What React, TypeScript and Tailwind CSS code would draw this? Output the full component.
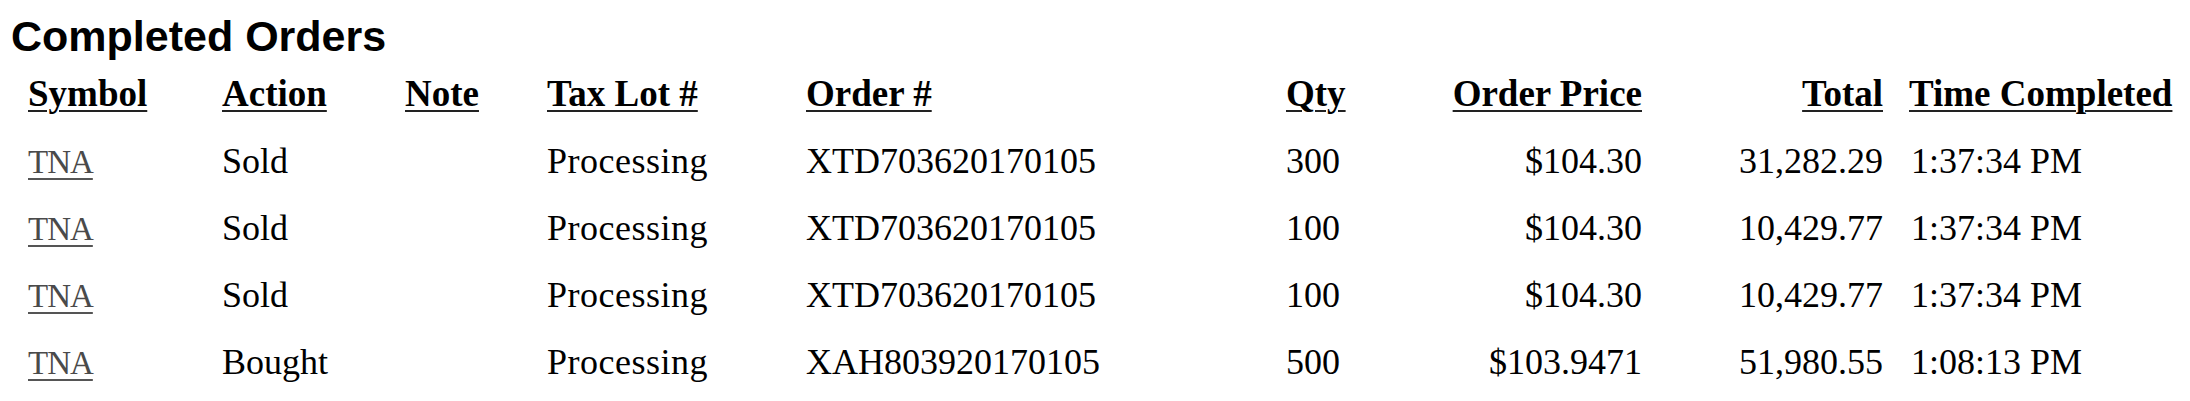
const headers = [
  { label: 'Symbol', align: 'left' },
  { label: 'Action', align: 'left' },
  { label: 'Note', align: 'left' },
  { label: 'Tax Lot #', align: 'left' },
  { label: 'Order #', align: 'left' },
  { label: 'Qty', align: 'left' },
  { label: 'Order Price', align: 'right' },
  { label: 'Total', align: 'right' },
  { label: 'Time Completed', align: 'time' },
];

const orders = [
  { symbol: 'TNA', action: 'Sold', note: '', taxLot: 'Processing', order: 'XTD703620170105', qty: '300', price: '$104.30', total: '31,282.29', time: '1:37:34 PM' },
  { symbol: 'TNA', action: 'Sold', note: '', taxLot: 'Processing', order: 'XTD703620170105', qty: '100', price: '$104.30', total: '10,429.77', time: '1:37:34 PM' },
  { symbol: 'TNA', action: 'Sold', note: '', taxLot: 'Processing', order: 'XTD703620170105', qty: '100', price: '$104.30', total: '10,429.77', time: '1:37:34 PM' },
  { symbol: 'TNA', action: 'Bought', note: '', taxLot: 'Processing', order: 'XAH803920170105', qty: '500', price: '$103.9471', total: '51,980.55', time: '1:08:13 PM' },
];

const grid = 'grid grid-cols-[194px_183px_142px_259px_480px_59px_297px_241px_1fr] h-[67px] items-center whitespace-nowrap';

export default function App(): React.ReactElement {
  return (
    <div className="w-[2190px] h-[401px] bg-white text-black overflow-hidden">
      {/* Title */}
      <h1 className="pt-[12px] pl-[11px] text-[43px] leading-[48px] font-bold font-['Liberation_Sans',Arial,sans-serif]">
        Completed Orders
      </h1>

      <div className="pl-[28px] font-['Liberation_Serif','Times_New_Roman',serif]">
        {/* Header row */}
        <div className={`${grid} text-[37px] font-bold`}>
          {headers.map(h => (
            <div
              key={h.label}
              className={h.align === 'right' ? 'text-right' : h.align === 'time' ? 'pl-[26px]' : ''}
            >
              <span className="underline decoration-2 decoration-[#222] underline-offset-[4px]">{h.label}</span>
            </div>
          ))}
        </div>

        {/* Data rows */}
        {orders.map((o, i) => (
          <div key={i} className={`${grid} text-[36px]`}>
            <div>
              <span className="text-[33px] tracking-[-1px] text-[#4a4a4a] underline decoration-2 decoration-[#555] underline-offset-[5px]">
                {o.symbol}
              </span>
            </div>
            <div>{o.action}</div>
            <div>{o.note}</div>
            <div className="tracking-[0.5px]">{o.taxLot}</div>
            <div>{o.order}</div>
            <div>{o.qty}</div>
            <div className="text-right">{o.price}</div>
            <div className="text-right">{o.total}</div>
            <div className="pl-[28px]">{o.time}</div>
          </div>
        ))}
      </div>
    </div>
  );
}
